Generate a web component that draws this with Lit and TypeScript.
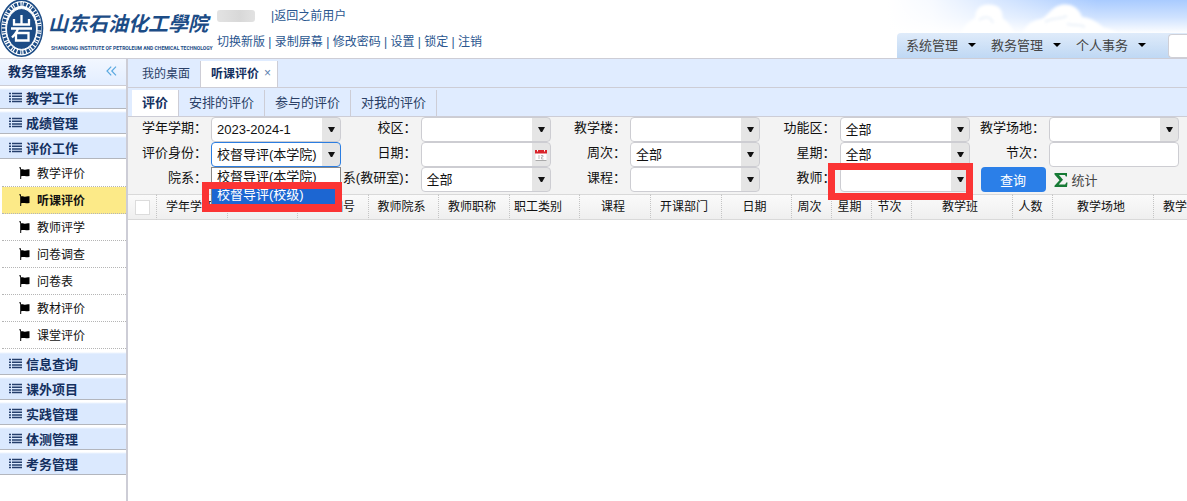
import { LitElement, html, css, nothing } from "lit";
import { customElement, property, state } from "lit/decorators.js";
import { classMap } from "lit/directives/class-map.js";

const base = css`
  *, *::before, *::after { box-sizing: border-box; }
  button, input, select { font: inherit; color: inherit; margin: 0; padding: 0; border: 0; background: none; }
  a { color: inherit; text-decoration: none; }
  ul { list-style: none; margin: 0; padding: 0; }
`;

@customElement("school-brand")
class SchoolBrand extends LitElement {
  static styles = [base, css`
    :host { display: flex; width: 213px; gap: 4px; height: 58px; color: #1c4c86; flex: none; }
    .emblem { width: 44px; height: 58px; flex: none; }
    .words { display: flex; flex-direction: column; padding-top: 5px; white-space: nowrap; }
    .name { font-size: 20px; line-height: 38px; font-weight: 700; font-style: italic; }
    .latin { font-family: Roboto, sans-serif; font-size: 5px; line-height: 10px; font-weight: 700; padding-left: 3px; }
  `];
  render() {
    return html`
      <svg class="emblem" viewBox="0 0 44 58" aria-hidden="true">
        <ellipse cx="21.5" cy="28.2" rx="21" ry="28" fill="#fff" stroke="#1c4c86" stroke-width="1.6"/>
        <ellipse cx="21.5" cy="28.2" rx="18" ry="24.2" fill="none" stroke="#1c4c86" stroke-width="3.6" stroke-dasharray="2.2 1.3 1 1.1 2.8 1.2"/>
        <ellipse cx="21.5" cy="29" rx="15" ry="20.4" fill="#1c4c86" stroke="#fff" stroke-width="1"/>
        <g fill="none" stroke="#fff" stroke-width="2.3">
          <path d="M21.500 15v9M14 19v5.500h15v-5.500M11 28.500h21M18 28.500c-1 4-3 6-6 9M16 33v7.500h12.500v-7.500z"/>
        </g>
      </svg>
      <div class="words">
        <span class="name">山东石油化工學院</span>
        <span class="latin">SHANDONG INSTITUTE OF PETROLEUM AND CHEMICAL TECHNOLOGY</span>
      </div>`;
  }
}

@customElement("app-banner")
class AppBanner extends LitElement {
  static styles = [base, css`
    :host { display: flex; height: 59px; border-bottom: 1px solid #cdcdd6; background: #fff; position: relative; overflow: hidden; }
    .sky { position: absolute; right: 0; top: 0; width: 300px; height: 58px; }
    .user { display: flex; flex-direction: column; padding: 7px 0 0 4px; font-size: 12px; color: #2a568f; white-space: nowrap; }
    .line { display: flex; line-height: 18px; height: 26px; }
    .mask { width: 38px; height: 12px; margin: 3px 16px 0 0; background: linear-gradient(90deg, #e3e3e3, #d8d8d8 60%, #e2e2e2); border-radius: 3px; }
    .sep { white-space: pre; }
    .menu { position: relative; margin-left: auto; align-self: flex-end; display: flex; height: 25px; padding-left: 9px; background: linear-gradient(#dfebfa, #bfd8f4); border-top-left-radius: 4px; }
    .item { display: flex; align-items: center; width: 85px; gap: 10px; padding-bottom: 2px; font-size: 13px; color: #444; white-space: nowrap; }
    .item::after { content: ""; border: 4px solid transparent; border-top-color: #000; border-bottom: 0; }
    .search { width: 19px; height: 24px; margin: 1px 0 0 7px; background: #fff; border: 1px solid #cfcfd6; border-right: 0; border-radius: 4px 0 0 4px; }
  `];
  render() {
    const links = ["切换新版", "录制屏幕", "修改密码", "设置", "锁定", "注销"];
    return html`
      <svg class="sky" viewBox="0 0 300 58" preserveAspectRatio="none" aria-hidden="true">
        <defs>
          <linearGradient id="d" x1="0" y1="0" x2="0" y2="1">
            <stop offset="0" stop-color="#a9cbff"/><stop offset=".3" stop-color="#cfe2ff"/><stop offset=".58" stop-color="#fff"/>
          </linearGradient>
          <linearGradient id="f"><stop offset="0" stop-color="#fff"/><stop offset=".15" stop-color="#fff" stop-opacity=".9"/><stop offset=".7" stop-color="#fff" stop-opacity="0"/></linearGradient>
          <filter id="b" x="-20%" y="-20%" width="140%" height="160%"><feGaussianBlur stdDeviation="1.6"/></filter>
        </defs>
        <rect width="300" height="58" fill="url(#d)"/>
        <rect width="300" height="58" fill="url(#f)"/>
        <g fill="#fff" filter="url(#b)">
          <path d="M74 40c0-14 8-18 14-22c0-12 10-15 18-13c10 2 9 9 10 14c6 3 10 10 14 21z"/>
          <path d="M134 40c2-12 8-19 20-21c6-2 10-12 20-14c10-2 18 3 21 12c12 2 16 6 22 11c8 1 14 5 20 12z"/>
        </g>
        <g fill="none" stroke="#e4edf8" stroke-width="1.500" filter="url(#b)">
          <path d="M92 20c6-5 12-3 14 3M158 22c8-5 14-2 22-6M180 24c8 2 12 0 18 3"/>
        </g>
      </svg>
      <school-brand></school-brand>
      <div class="user">
        <div class="line"><span class="mask"></span><span>|</span><a href="#">返回之前用户</a></div>
        <nav class="line">
          ${links.map((l, i) => html`${i ? html`<span class="sep"> | </span>` : nothing}<a href="#">${l}</a>`)}
        </nav>
      </div>
      <div class="menu">
        ${["系统管理", "教务管理", "个人事务"].map((m) => html`<button class="item">${m}</button>`)}
        <input class="search" aria-label="搜索">
      </div>`;
  }
}

@customElement("side-menu")
class SideMenu extends LitElement {
  @state() private current = "听课评价";
  static styles = [base, css`
    :host { display: block; width: 128px; flex: none; border-right: 2px solid #cdcdd6; background: #fff; color: #14305f; }
    .head { display: flex; align-items: center; justify-content: space-between; height: 27px; padding: 0 9px 3px 8px; border-bottom: 1px solid #ccccd4; background: linear-gradient(#f2f7ff, #e2edff); font-size: 13px; font-weight: 700; }
    .fold { display: flex; }
    .group { display: flex; align-items: center; gap: 4px; width: 100%; height: 25px; padding: 2px 0 0 9px; border-bottom: 1px solid #b3b6bd; background: linear-gradient(#fff 2px, #dbe9fe 4px); font-size: 13px; font-weight: 700; }
    .head + .group { height: 23px; padding-top: 0; }
    .items { padding: 1px 0 1px 2px; color: #111; }
    .item { display: flex; align-items: center; gap: 7px; width: 100%; height: 27px; padding: 0 0 1px 17px; border-bottom: 1px dotted #b5b5b5; font-size: 12px; }
    .on { background: #fcea88; font-weight: 700; }
  `];
  private group(name: string) {
    return html`<button class="group">
      <svg width="13" height="11" viewBox="0 0 13 11" aria-hidden="true">
        <path d="M0 1.5h2M3 1.5h10M0 4.2h2M3 4.2h10M0 6.9h2M3 6.9h10M0 9.6h2M3 9.6h10" stroke="#253f6c" stroke-width="1.5"/>
      </svg>${name}</button>`;
  }
  render() {
    const items = ["教学评价", "听课评价", "教师评学", "问卷调查", "问卷表", "教材评价", "课堂评价"];
    return html`
      <div class="head">教务管理系统
        <button class="fold" aria-label="收起"><svg width="11" height="10" viewBox="0 0 11 10"><path d="M5.2.7L1 5l4.2 4.3M10 .7L5.8 5l4.2 4.3" fill="none" stroke="#5aa9e0" stroke-width="1.2"/></svg></button>
      </div>
      ${["教学工作", "成绩管理", "评价工作"].map((g) => this.group(g))}
      <ul class="items">
        ${items.map((t) => html`<li><button class=${classMap({ item: true, on: t === this.current })} @click=${() => (this.current = t)}>
          <svg width="11" height="12" viewBox="0 0 11 12" aria-hidden="true"><path d="M0 .5l1.600-.5.500 2.200c2-.3 3 .6 5 .4 1.200-.1 2-.3 3.400-.3v6.700c-2 .3-3 .4-4.500.1-1.500-.3-2.500-.3-3.800.1V12H1.200V2z"/></svg>${t}
        </button></li>`)}
      </ul>
      ${["信息查询", "课外项目", "实践管理", "体测管理", "考务管理"].map((g) => this.group(g))}`;
  }
}

@customElement("filter-field")
class FilterField extends LitElement {
  @property() label = "";
  @property() value = "";
  @property() kind: "combo" | "date" | "text" = "combo";
  @property({ type: Array }) options: string[] = [];
  @property({ type: Boolean }) marked = false;
  static styles = [base, css`
    :host { display: contents; }
    .label { display: flex; justify-content: flex-end; height: 25px; padding-right: 4px; line-height: 22px; white-space: nowrap; }
    .box { position: relative; height: 25px; }
    .control { display: block; width: 100%; height: 25px; padding: 0 20px 0 5px; border: 1px solid #cdcdd2; border-radius: 4px; background: linear-gradient(#e5e5e5, #e5e5e5) right / 18px 100% no-repeat #fff; appearance: none; outline: 0; }
    .text { background: #fff; }
    .open { border-color: #2b7de1; }
    .icon { position: absolute; right: 0; top: 0; width: 19px; height: 25px; display: flex; align-items: center; justify-content: center; pointer-events: none; }
    .list { position: absolute; z-index: 2; top: 25px; left: 0; right: 0; padding-bottom: 2px; background: #fff; border: 1px solid #888; }
    .option { height: 18px; line-height: 18px; padding-left: 5px; white-space: nowrap; }
    .picked { background: #1c66d2; color: #fff; }
    .frame { position: absolute; z-index: 3; border: 7px solid #fb3434; pointer-events: none; }
    .around-option { top: 40px; left: -9px; width: 140px; height: 30px; border-bottom-width: 8px; }
    .around-box { top: -4px; left: -12px; right: -3px; height: 37px; }
  `];
  render() {
    const open = this.options.length > 0;
    return html`
      <label class="label" for="c">${this.label}：</label>
      <div class="box">
        ${this.kind === "combo"
          ? html`<select id="c" class=${classMap({ control: true, open })}><option>${this.value}</option></select>
              <span class="icon"><svg width="7" height="5" viewBox="0 0 7 5"><path d="M0 0h7L4.200 5H2.800z" fill="#111"/></svg></span>`
          : html`<input id="c" class=${classMap({ control: true, text: this.kind === "text" })}>`}
        ${this.kind === "date"
          ? html`<span class="icon"><svg width="12" height="12" viewBox="0 0 12 12">
              <path d="M.5 3h11v8.500H.5z" fill="#fff"/><path d="M.5 11.500h11" stroke="#aaa"/><path d="M0 1h12v3.500H0z" fill="#d9252b"/>
              <path d="M2.500 1v1.500M9.500 1v1.500" stroke="#fff"/><path d="M4 6v4M6 6.500h2v1.500H6.500v2H8.500" fill="none" stroke="#aaa" stroke-width=".8"/></svg></span>`
          : nothing}
        ${open
          ? html`<ul class="list" role="listbox">${this.options.map((o, i) => html`<li role="option" class=${classMap({ option: true, picked: i === 1 })}>${o}</li>`)}</ul>
              <span class="frame around-option"></span>`
          : nothing}
        ${this.marked ? html`<span class="frame around-box"></span>` : nothing}
      </div>`;
  }
}

@customElement("course-panel")
class CoursePanel extends LitElement {
  static styles = [base, css`
    :host { display: flex; flex-direction: column; flex: 1; min-width: 0; color: #111; }
    .tabs { display: flex; height: 29px; padding: 2px 0 0 4px; background: #e0ecff; border-bottom: 1px solid #cdcdd6; color: #2b3f66; }
    .pages { font-size: 12px; }
    .views { font-size: 13px; }
    .tab { display: flex; align-items: center; gap: 5px; padding: 0 10px 3px; border-right: 1px solid #cdcdd6; white-space: nowrap; }
    .tab.on { background: #fff; color: #14305f; font-weight: 700; }
    .pages .on { padding-right: 6px; }
    .close { color: #5b80b0; font-weight: 400; }
    .filters { display: grid; grid-template-columns: 83px 130px repeat(4, minmax(69px, 1fr) 130px); grid-auto-rows: 25px; padding: 0 8px 2px 0; background: #f3f3f3; font-size: 13px; }
    .actions { grid-column: span 2; display: flex; gap: 8px; padding-left: 11px; }
    .query { width: 65px; height: 25px; border-radius: 4px; background: #2b7fe8; color: #fff; }
    .stats { display: flex; align-items: center; gap: 4px; color: #444; }
    .grid { width: 100%; table-layout: fixed; border-collapse: separate; border-spacing: 0; font-size: 12px; }
    .grid th { height: 26px; padding: 0 4px 4px 0; font-weight: 400; background: linear-gradient(#fafafa, #efefef); border: solid #d9d9d9; border-width: 1px 0; border-right: 1px dotted #c4c4c4; white-space: nowrap; overflow: hidden; }
    .grid th.start { text-align: left; padding-left: 4px; }
    .grid th:last-child { text-align: left; padding-left: 9px; border-right: 0; }
    .grid th:first-child { padding: 0; }
    .c29 { width: 29px; } .c40 { width: 40px; } .c70 { width: 70px; } .c71 { width: 71px; } .c101 { width: 101px; }
    .check { display: block; margin: 0 auto; width: 15px; height: 15px; appearance: none; background: #fff; border: 1px solid #dcdcdc; }
  `];
  render() {
    const cols: [string, string][] = [
      ["学年学期", "c71"], ["", "c70"], ["教师编号", "c71"], ["教师院系", "c70"], ["教师职称", "c71"],
      ["职工类别", "c70 start"], ["课程", "c71"], ["开课部门", "c71"], ["日期", "c70"], ["周次", "c40"], ["星期", "c40"],
      ["节次", "c40"], ["教学班", "c101"], ["人数", "c40"], ["教学场地", "c101"], ["教学", ""],
    ];
    return html`
      <div class="tabs pages">
        <button class="tab">我的桌面</button>
        <button class="tab on">听课评价<span class="close">×</span></button>
      </div>
      <div class="tabs views">
        <button class="tab on">评价</button><button class="tab">安排的评价</button>
        <button class="tab">参与的评价</button><button class="tab">对我的评价</button>
      </div>
      <form class="filters">
        <filter-field label="学年学期" value="2023-2024-1"></filter-field>
        <filter-field label="校区"></filter-field>
        <filter-field label="教学楼"></filter-field>
        <filter-field label="功能区" value="全部"></filter-field>
        <filter-field label="教学场地"></filter-field>
        <filter-field label="评价身份" value="校督导评(本学院)" .options=${["校督导评(本学院)", "校督导评(校级)"]}></filter-field>
        <filter-field label="日期" kind="date"></filter-field>
        <filter-field label="周次" value="全部"></filter-field>
        <filter-field label="星期" value="全部"></filter-field>
        <filter-field label="节次" kind="text"></filter-field>
        <filter-field label="院系"></filter-field>
        <filter-field label="系(教研室)" value="全部"></filter-field>
        <filter-field label="课程"></filter-field>
        <filter-field label="教师" marked></filter-field>
        <div class="actions">
          <button type="button" class="query">查询</button>
          <button type="button" class="stats">
            <svg width="14" height="14" viewBox="0 0 13 14" aria-hidden="true"><path d="M0 0h12.500v3.500h-1.200L10.500 2H4.500l4 4.700L4.200 11.500h6.500l1-2H13L12.500 14H0v-1.200L5 7.300 0 1.500z" fill="#177a35"/></svg>统计
          </button>
        </div>
      </form>
      <table class="grid">
        <thead><tr>
          <th class="c29"><input type="checkbox" class="check" aria-label="全选"></th>
          ${cols.map(([t, c]) => html`<th class=${c}>${t}</th>`)}
        </tr></thead>
      </table>`;
  }
}

@customElement("app-root")
class AppRoot extends LitElement {
  static styles = [base, css`
    :host { display: flex; flex-direction: column; min-height: 100vh; overflow: hidden; background: #fff; font-family: "Liberation Sans", "Noto Sans CJK SC", sans-serif; font-size: 13px; }
    .body { display: flex; flex: 1; }
  `];
  render() {
    return html`<app-banner></app-banner><div class="body"><side-menu></side-menu><course-panel></course-panel></div>`;
  }
}
